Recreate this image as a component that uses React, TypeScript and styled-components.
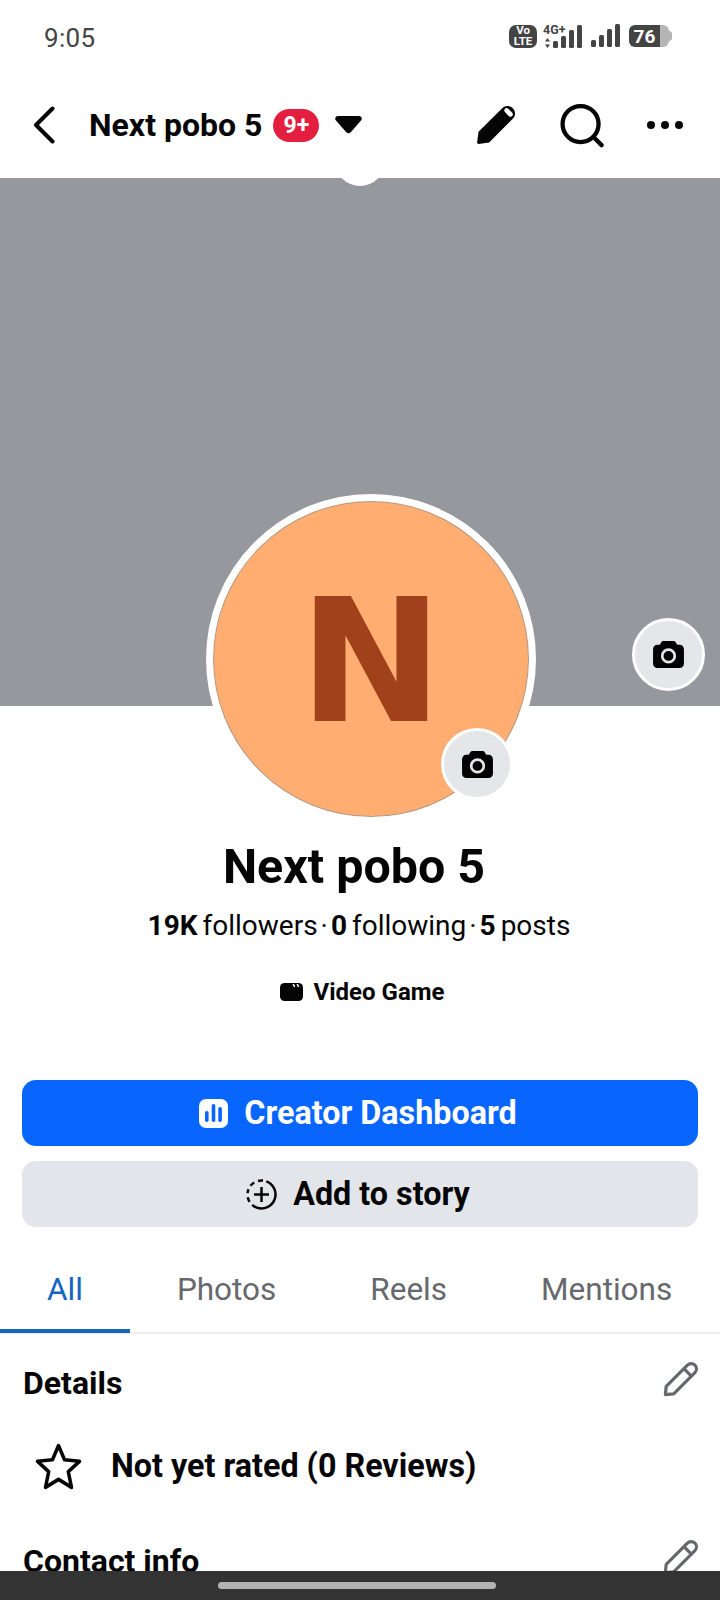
import React from 'react';
import styled, { createGlobalStyle } from 'styled-components';

const GlobalStyle = createGlobalStyle`
  html, body {
    margin: 0;
    padding: 0;
    background: #fff;
  }
  body {
    font-family: Roboto, "Liberation Sans", sans-serif;
    color: #050505;
  }
`

const Page = styled.div`
  position: relative;
  width: 720px;
  height: 1600px;
  overflow: hidden;
  background: #fff;
`

const StatusBar = styled.div`
  display: flex;
  align-items: center;
  justify-content: space-between;
  height: 72px;
  padding: 0 48px 0 44px;
  box-sizing: border-box;
  color: #444;
`

const Clock = styled.span`
  margin-top: 3px;
  font-size: 26px;
  letter-spacing: 0.3px;
`

const StatusIcons = styled.div`
  display: flex;
  align-items: center;
  gap: 6px;
`

const VoLte = styled.div`
  display: flex;
  flex-direction: column;
  align-items: center;
  justify-content: center;
  width: 28px;
  height: 23px;
  margin-right: -2px;
  border-radius: 7px;
  background: #444;
  color: #fff;
  font-size: 11.500px;
  font-weight: 700;
  line-height: 11px;
`

const NetworkBars = styled.svg`
  margin-top: -2px;
`

const SignalBars = styled.svg`
  margin-left: 3px;
`

const Battery = styled.div`
  position: relative;
  display: flex;
  align-items: center;
  justify-content: center;
  width: 31px;
  height: 22px;
  padding-right: 9px;
  margin: 0 3px 0 3px;
  border-radius: 6px;
  background: linear-gradient(to right, #444 31px, #b5b5b5 31px);
  color: #fff;
  font-size: 19px;
  font-weight: 700;

  &::after {
    content: '';
    position: absolute;
    top: 6px;
    right: -3px;
    width: 3px;
    height: 10px;
    border-radius: 0 3px 3px 0;
    background: #b5b5b5;
  }
`

const TopBar = styled.header`
  display: flex;
  align-items: center;
  height: 106px;
  padding: 0 37px 0 33px;
  box-sizing: border-box;
`

const TopTitle = styled.span`
  margin-left: 34px;
  font-size: 32px;
  font-weight: 700;
  white-space: nowrap;
`

const Badge = styled.span`
  display: flex;
  align-items: center;
  justify-content: center;
  width: 46px;
  height: 33px;
  margin-left: 11px;
  border-radius: 17px;
  background: #e41e3f;
  color: #fff;
  font-size: 23px;
  font-weight: 700;
`

const Caret = styled.svg`
  width: 27px;
  height: 18px;
  margin-left: 16px;
`

const TopActions = styled.div`
  display: flex;
  align-items: center;
  gap: 43px;
  margin-left: auto;

  svg {
    overflow: visible;
  }
`

const Cover = styled.section`
  position: relative;
  height: 528px;
  background: #95989c;
`

const PullIndicator = styled.div`
  position: absolute;
  top: -26px;
  left: 335px;
  width: 50px;
  height: 34px;
  border-radius: 0 0 25px 25px;
  background: #fff;
`

const Avatar = styled.div`
  position: absolute;
  top: 316px;
  left: 206px;
  display: flex;
  align-items: center;
  justify-content: center;
  width: 316px;
  height: 316px;
  border: 7px solid #fff;
  border-radius: 50%;
  background: #ffad71;
  box-shadow: inset 0 0 0 1px #a89a8c;
`

const AvatarLetter = styled.span`
  margin-top: 5px;
  font-family: "DejaVu Sans", "Liberation Sans", sans-serif;
  font-size: 172px;
  font-weight: 700;
  line-height: 1;
  color: #a1411c;
`

const CameraButton = styled.div<{ $size: number; $top: number; $left: number }>`
  position: absolute;
  top: ${p => p.$top}px;
  left: ${p => p.$left}px;
  display: flex;
  align-items: center;
  justify-content: center;
  width: ${p => p.$size}px;
  height: ${p => p.$size}px;
  box-sizing: border-box;
  border: 3px solid #fff;
  border-radius: 50%;
  background: #e4e6e9;
`

const Profile = styled.section`
  display: flex;
  flex-direction: column;
  align-items: center;
  padding-top: 133px;
`

const Name = styled.h1`
  margin: 0 12px 0 0;
  font-size: 48.400px;
  font-weight: 700;
  line-height: 56px;
`

const Stats = styled.div`
  display: flex;
  align-items: center;
  gap: 3px;
  height: 36px;
  margin: 12px 2px 0 0;
  font-size: 28px;
  word-spacing: -2px;
`

const StatValue = styled.b`
  font-weight: 700;
`

const Category = styled.div`
  display: flex;
  align-items: center;
  gap: 11px;
  height: 30px;
  margin: 34px 0 0 4px;
  font-size: 24px;
  font-weight: 700;
`

const Actions = styled.div`
  display: flex;
  flex-direction: column;
  gap: 15px;
  margin: 73px 22px 0;
`

const ActionButton = styled.div<{ $primary?: boolean }>`
  display: flex;
  align-items: center;
  justify-content: center;
  gap: 16px;
  height: 66px;
  padding-right: 4px;
  border-radius: 14px;
  background: ${p => (p.$primary ? '#0866ff' : '#e2e5e9')};
  color: ${p => (p.$primary ? '#fff' : '#050505')};
  font-size: 32.300px;
  font-weight: 700;
`

const Tabs = styled.nav`
  display: flex;
  margin-top: 22px;
  border-bottom: 2px solid #eeeeee;
`

const Tab = styled.div<{ $active?: boolean }>`
  display: flex;
  align-items: center;
  height: 84px;
  padding: 0 47px;
  box-sizing: border-box;
  border-bottom: 4px solid ${p => (p.$active ? '#1565c0' : 'transparent')};
  margin-bottom: -1px;
  color: ${p => (p.$active ? '#1565c0' : '#65686c')};
  font-size: 31.500px;
`

const Section = styled.section`
  display: flex;
  flex-direction: column;
  padding: 0 23px;
`

const SectionHead = styled.div<{ $top: number }>`
  display: flex;
  align-items: center;
  justify-content: space-between;
  height: 40px;
  margin-top: ${p => p.$top}px;
`

const SectionTitle = styled.h2`
  margin: 0;
  font-size: 32px;
  font-weight: 700;
`

const PencilSvg = styled.svg`
  margin-top: -6px;
  overflow: visible;
`

const RatingRow = styled.div`
  display: flex;
  align-items: center;
  gap: 29px;
  height: 46px;
  margin: 40px 0 0 12px;
  font-size: 32.300px;
  font-weight: 700;
`

const BottomBar = styled.div`
  position: absolute;
  left: 0;
  right: 0;
  bottom: 0;
  display: flex;
  justify-content: center;
  height: 29px;
  padding-top: 11px;
  box-sizing: border-box;
  background: #333;
`

const HomeHandle = styled.div`
  width: 278px;
  height: 7px;
  margin-left: -6px;
  border-radius: 4px;
  background: #b3b3b3;
`

function CameraIcon() {
  return (
    <svg width='31' height='27' viewBox='0 0 32 28'>
      <path
        fill='#000'
        d='M11 0h10c1.300 0 2.300.7 2.800 1.800L25 4h2.500C30 4 32 6 32 8.500v15C32 26 30 28 27.500 28h-23C2 28 0 26 0 23.500v-15C0 6 2 4 4.500 4H7l1.200-2.200C8.700.700 9.700 0 11 0z'
      />
      <circle cx='16' cy='15.500' r='6.500' fill='none' stroke='#e4e6e9' strokeWidth='2.800' />
    </svg>
  )
}

function OutlinePencil() {
  return (
    <PencilSvg width='35' height='35' viewBox='0 0 35 35' fill='none' stroke='#65686c' strokeWidth='3.200' strokeLinejoin='round'>
      <g transform='rotate(45 17.500 17.500)'>
        <path d='M12.200 1a5.300 5.300 0 0 1 10.600 0V31l-5.300 6.500L12.200 31z' />
        <path d='M12.200 6h10.600' />
      </g>
    </PencilSvg>
  )
}

export default function App() {
  return (
    <Page>
      <GlobalStyle />
      <StatusBar>
        <Clock>9:05</Clock>
        <StatusIcons>
          <VoLte>
            <span>Vo</span>
            <span>LTE</span>
          </VoLte>
          <NetworkBars width='41' height='27' viewBox='0 -2 41 27' fill='#444'>
            <text x='2' y='10' fontSize='12.500' fontWeight='700' fontFamily='Roboto, sans-serif'>4G+</text>
            <path d='M6.500 14l2.500 3.500H4zM6.500 24L4 20.500h5z' />
            <rect x='12' y='17' width='5' height='7' rx='1.500' />
            <rect x='20' y='12' width='5' height='12' rx='1.500' />
            <rect x='28' y='6' width='5' height='18' rx='1.500' />
            <rect x='36' y='1' width='5' height='23' rx='1.500' />
          </NetworkBars>
          <SignalBars width='29' height='24' viewBox='0 0 29 24' fill='#444'>
            <rect x='0' y='16' width='5' height='7' rx='1.500' />
            <rect x='8' y='11' width='5' height='12' rx='1.500' />
            <rect x='16' y='5' width='5' height='18' rx='1.500' />
            <rect x='24' y='0' width='5' height='23' rx='1.500' />
          </SignalBars>
          <Battery>76</Battery>
        </StatusIcons>
      </StatusBar>

      <TopBar>
        <svg width='22' height='38' viewBox='0 0 22 38' fill='none' stroke='#050505' strokeWidth='4' strokeLinecap='round' strokeLinejoin='round'>
          <path d='M19.500 2.500L3 19l16.500 16.500' />
        </svg>
        <TopTitle>Next pobo 5</TopTitle>
        <Badge>9+</Badge>
        <Caret viewBox='0 0 27 18'>
          <path fill='#050505' d='M3 0h21c2.500 0 3.700 2.800 2 4.600L16 16c-1.500 1.800-3.500 1.800-5 0L1 4.600C-.7 2.800.5 0 3 0z' />
        </Caret>
        <TopActions>
          <svg width='43' height='43' viewBox='0 0 43 43'>
            <g transform='rotate(45 21.500 21.500)'>
              <path
                fill='#050505'
                fillRule='evenodd'
                d='M21.500 -3c4.200 0 7.500 3.300 7.500 7.500V38l-6.500 8.500c-.5.600-1.500.6-2 0L14 38V4.500C14 .3 17.300-3 21.500-3zM19 .6c-1.500 0-2.600 1-2.600 2.400S17.500 5.400 19 5.400h5c1.500 0 2.600-1 2.600-2.400S25.500.6 24 .6z'
              />
            </g>
          </svg>
          <svg width='44' height='45' viewBox='0 0 46 46' fill='none' stroke='#050505' strokeWidth='4.500' strokeLinecap='round'>
            <circle cx='21.500' cy='21.500' r='18.800' />
            <path d='M35 35l8.500 8.500' />
          </svg>
          <svg width='36' height='8' viewBox='0 0 36 8' fill='#050505'>
            <circle cx='4' cy='4' r='4' />
            <circle cx='18' cy='4' r='4' />
            <circle cx='32' cy='4' r='4' />
          </svg>
        </TopActions>
      </TopBar>

      <Cover>
        <PullIndicator />
        <Avatar>
          <AvatarLetter>N</AvatarLetter>
        </Avatar>
        <CameraButton $size={72} $top={550} $left={441}>
          <CameraIcon />
        </CameraButton>
        <CameraButton $size={73} $top={440} $left={632}>
          <CameraIcon />
        </CameraButton>
      </Cover>

      <Profile>
        <Name>Next pobo 5</Name>
        <Stats>
          <span><StatValue>19K</StatValue> followers</span>
          <span>·</span>
          <span><StatValue>0</StatValue> following</span>
          <span>·</span>
          <span><StatValue>5</StatValue> posts</span>
        </Stats>
        <Category>
          <svg width='23' height='18' viewBox='0 0 23 18'>
            <rect width='23' height='18' rx='4.500' fill='#050505' />
            <path fill='#fff' d='M12.500 1l1.200 3h1.600l-1.200-3zM16.500 1l1.200 3h1.600l-1.200-3z' />
          </svg>
          Video Game
        </Category>
      </Profile>

      <Actions>
        <ActionButton $primary>
          <svg width='29' height='29' viewBox='0 0 29 29'>
            <rect width='29' height='29' rx='7' fill='#fff' />
            <rect x='6' y='12' width='3.600' height='11' rx='1.800' fill='#0866ff' />
            <rect x='12.700' y='5' width='3.600' height='18' rx='1.800' fill='#0866ff' />
            <rect x='19.300' y='8' width='3.600' height='15' rx='1.800' fill='#0866ff' />
          </svg>
          Creator Dashboard
        </ActionButton>
        <ActionButton>
          <svg width='31' height='31' viewBox='0 0 31 31' fill='none' stroke='#050505' strokeWidth='2.500' strokeLinecap='butt'>
            <circle cx='15.500' cy='15.500' r='14' strokeDasharray='49 4 5 4 4 4 5 4 5 4' transform='rotate(-70 15.500 15.500)' />
            <path d='M15.500 8v15M8 15.500h15' />
          </svg>
          Add to story
        </ActionButton>
      </Actions>

      <Tabs>
        <Tab $active>All</Tab>
        <Tab>Photos</Tab>
        <Tab>Reels</Tab>
        <Tab>Mentions</Tab>
      </Tabs>

      <Section>
        <SectionHead $top={29}>
          <SectionTitle>Details</SectionTitle>
          <OutlinePencil />
        </SectionHead>
        <RatingRow>
          <svg width='47' height='47' viewBox='0 0 47 45' preserveAspectRatio='none' fill='none' stroke='#050505' strokeWidth='3.500' strokeLinejoin='round'>
            <path d='M23.500 2.500l6 13.500 15 1.500-11.200 10 3.200 15-13-7.600-13 7.600 3.200-15L2.500 17.500l15-1.500z' />
          </svg>
          Not yet rated (0 Reviews)
        </RatingRow>
        <SectionHead $top={52}>
          <SectionTitle>Contact info</SectionTitle>
          <OutlinePencil />
        </SectionHead>
      </Section>

      <BottomBar>
        <HomeHandle />
      </BottomBar>
    </Page>
  )
}
